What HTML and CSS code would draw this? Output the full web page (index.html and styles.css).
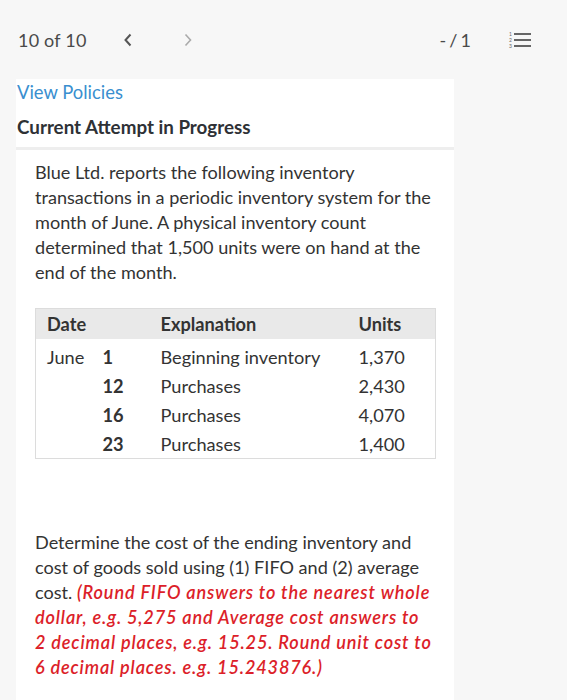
FILE: index.html
```html
<!DOCTYPE html>
<html lang="en">
<head>
<meta charset="utf-8">
<title>Question 10 of 10</title>
<link rel="stylesheet" href="styles.css">
</head>
<body>
<header class="topbar">
  <span class="counter">10 of 10</span>
  <span class="nav prev">
    <svg width="10" height="14" viewBox="0 0 10 14"><path d="M7.5 1.5 L2.5 7 L7.5 12.5" fill="none" stroke="#555" stroke-width="2"/></svg>
  </span>
  <span class="nav next">
    <svg width="10" height="14" viewBox="0 0 10 14"><path d="M2.5 1.5 L7.5 7 L2.5 12.5" fill="none" stroke="#aaa" stroke-width="1.6"/></svg>
  </span>
  <span class="spacer"></span>
  <span class="score">- / 1</span>
  <span class="listicon">
    <svg width="24" height="18" viewBox="0 0 24 18">
      <text x="1" y="5" font-size="5" font-family="Lato, sans-serif" fill="#666">1</text>
      <text x="1" y="11" font-size="5" font-family="Lato, sans-serif" fill="#666">2</text>
      <text x="1" y="17" font-size="5" font-family="Lato, sans-serif" fill="#666">3</text>
      <rect x="6" y="2" width="17" height="2" fill="#666"/>
      <rect x="6" y="8" width="17" height="2" fill="#666"/>
      <rect x="6" y="14" width="17" height="2" fill="#666"/>
    </svg>
  </span>
</header>

<section class="panel policies">
  <a class="policies-link" href="#">View Policies</a>
  <h2 class="attempt">Current Attempt in Progress</h2>
</section>

<section class="panel question">
  <p class="intro">Blue Ltd. reports the following inventory transactions in a periodic inventory system for the month of June. A physical inventory count determined that 1,500 units were on hand at the end of the month.</p>

  <table class="inv">
    <colgroup>
      <col class="w-month">
      <col class="w-day">
      <col class="w-exp">
      <col>
    </colgroup>
    <thead>
      <tr><th colspan="2">Date</th><th>Explanation</th><th>Units</th></tr>
    </thead>
    <tbody>
      <tr class="first"><td>June</td><td class="c-day">1</td><td>Beginning inventory</td><td>1,370</td></tr>
      <tr><td></td><td class="c-day">12</td><td>Purchases</td><td>2,430</td></tr>
      <tr><td></td><td class="c-day">16</td><td>Purchases</td><td>4,070</td></tr>
      <tr><td></td><td class="c-day">23</td><td>Purchases</td><td>1,400</td></tr>
    </tbody>
  </table>

  <p class="task">Determine the cost of the ending inventory and cost of goods sold using (1) FIFO and (2) average cost. <em class="note">(Round FIFO answers to the nearest whole dollar, e.g. 5,275 and Average cost answers to 2 decimal places, e.g. 15.25. Round unit cost to 6 decimal places. e.g. 15.243876.)</em></p>
</section>
</body>
</html>
```

FILE: styles.css
```css
html, body {
  margin: 0;
  padding: 0;
  background: #f7f7f7;
  font-family: Lato, "Noto Sans", sans-serif;
  color: #333;
}

.topbar {
  display: flex;
  align-items: center;
  height: 79px;
  padding: 0 35px 0 18px;
  box-sizing: border-box;
}

.counter {
  font-size: 18px;
  color: #4a4a4a;
  letter-spacing: 0.2px;
}

.nav {
  display: flex;
  align-items: center;
}

.prev { margin-left: 36px; }
.next { margin-left: 50px; }

.spacer { flex: 1; }

.score {
  font-size: 18px;
  color: #4a4a4a;
  word-spacing: -1.5px;
}

.listicon {
  display: flex;
  margin-left: 37px;
}

.panel {
  background: #fff;
  margin-left: 16px;
  width: 438px;
  box-sizing: border-box;
}

.policies {
  padding: 1px 0 8px 1px;
  border-bottom: 3px solid #eeeeee;
}

.policies-link {
  display: block;
  font-size: 18.4px;
  line-height: 24px;
  color: #3a8fcf;
  text-decoration: none;
}

.attempt {
  margin: 11px 0 0;
  font-size: 18.8px;
  line-height: 24px;
  font-weight: 700;
  color: #2e3136;
}

.question {
  padding: 10px 19px 40px 19px;
}

.intro, .task {
  margin: 0;
  font-size: 18.1px;
  line-height: 25px;
  color: #333;
}

.inv {
  margin-top: 23px;
  width: 401px;
  table-layout: fixed;
  border: 1px solid #dcdcdc;
  border-collapse: collapse;
  font-size: 18.2px;
}

.w-month { width: 56px; }
.w-day { width: 58px; }
.w-exp { width: 198px; }

.inv th {
  background: #e9e9e9;
  text-align: left;
  font-weight: 700;
  height: 30px;
  padding: 0 11px;
  color: #333;
  white-space: nowrap;
}

.inv td {
  height: 29px;
  padding: 0 11px;
  color: #333;
  white-space: nowrap;
}

.inv tr.first td {
  padding-top: 3px;
}

.inv .c-day { font-weight: 700; }

.task {
  margin-top: 71px;
}

.note {
  color: #dc1f2a;
  font-weight: 600;
  font-style: italic;
  letter-spacing: 0.85px;
}
```
